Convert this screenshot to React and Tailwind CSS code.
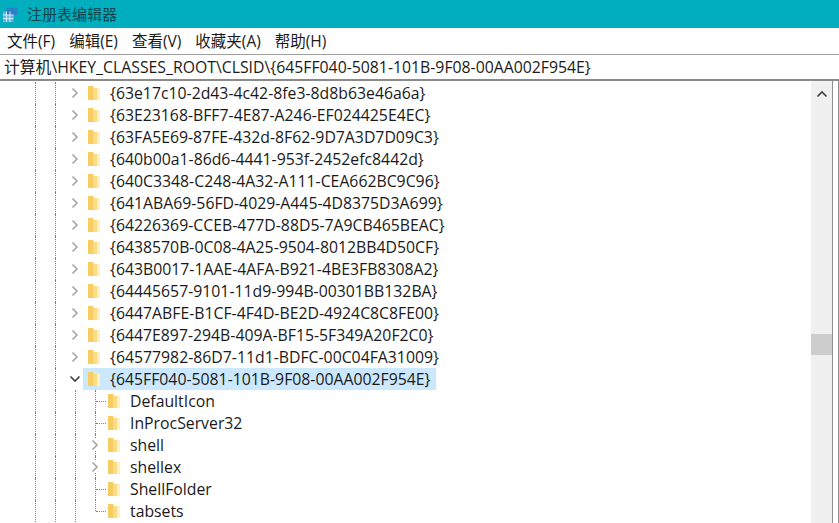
const keys = [
  "{63e17c10-2d43-4c42-8fe3-8d8b63e46a6a}",
  "{63E23168-BFF7-4E87-A246-EF024425E4EC}",
  "{63FA5E69-87FE-432d-8F62-9D7A3D7D09C3}",
  "{640b00a1-86d6-4441-953f-2452efc8442d}",
  "{640C3348-C248-4A32-A111-CEA662BC9C96}",
  "{641ABA69-56FD-4029-A445-4D8375D3A699}",
  "{64226369-CCEB-477D-88D5-7A9CB465BEAC}",
  "{6438570B-0C08-4A25-9504-8012BB4D50CF}",
  "{643B0017-1AAE-4AFA-B921-4BE3FB8308A2}",
  "{64445657-9101-11d9-994B-00301BB132BA}",
  "{6447ABFE-B1CF-4F4D-BE2D-4924C8C8FE00}",
  "{6447E897-294B-409A-BF15-5F349A20F2C0}",
  "{64577982-86D7-11d1-BDFC-00C04FA31009}",
];

const children = [
  { name: "DefaultIcon" },
  { name: "InProcServer32" },
  { name: "shell", more: true },
  { name: "shellex", more: true },
  { name: "ShellFolder" },
  { name: "tabsets" },
];

const menus = ["文件(F)", "编辑(E)", "查看(V)", "收藏夹(A)", "帮助(H)"];

function Folder() {
  return (
    <svg width="12" height="16" viewBox="0 0 12 16" className="shrink-0">
      <path d="M0 1h5l1 2v12H0z" fill="#f7cd62" />
      <path d="M5 3h4v12H5z" fill="#fbdc86" />
      <path d="M9 3h3v12H9z" fill="#fdf0c4" />
    </svg>
  );
}

function Chevron({ open }) {
  return (
    <svg width="12" height="12" viewBox="0 0 12 12" fill="none" strokeWidth="1.6">
      {open ? (
        <path d="M1.5 3.5 6 8l4.5-4.5" stroke="#404040" />
      ) : (
        <path d="M3.5 1.5 8 6l-4.5 4.5" stroke="#a6a6a6" />
      )}
    </svg>
  );
}

function Guide({ narrow }) {
  return (
    <div className={`${narrow ? "w-[14px]" : "w-5"} shrink-0 self-stretch border-l border-dotted border-[#808080]`} />
  );
}

function KeyRow({ text, open }) {
  return (
    <div className="flex h-[22px] items-center pl-[35px]">
      <Guide />
      <Guide narrow />
      <div className="mr-[2px] w-3 shrink-0">
        <Chevron open={open} />
      </div>
      <div className={`flex h-full items-center pl-[5px] pr-[5px] ${open ? "bg-[#cce8ff]" : ""}`}>
        <Folder />
        <span className="ml-[10px] whitespace-nowrap pt-[2px]">{text}</span>
      </div>
    </div>
  );
}

function ChildRow({ item, last }) {
  return (
    <div className="flex h-[22px] items-center pl-[35px]">
      <Guide />
      <Guide />
      <Guide narrow />
      <div className="relative flex h-full w-3 shrink-0 items-center justify-center">
        <div className={`absolute left-[6px] top-0 border-l border-dotted border-[#808080] ${last ? "h-[11px]" : "h-full"}`} />
        {item.more ? (
          <div className="relative bg-white">
            <Chevron />
          </div>
        ) : (
          <div className="absolute left-[7px] top-[11px] w-[10px] border-t border-dotted border-[#808080]" />
        )}
      </div>
      <div className="ml-[7px] flex items-center">
        <Folder />
        <span className="ml-[10px] whitespace-nowrap pt-[2px]">{item.name}</span>
      </div>
    </div>
  );
}

export default function App() {
  return (
    <div className="flex h-[523px] w-[839px] flex-col overflow-hidden bg-white font-['Open_Sans','Noto_Sans_CJK_SC',sans-serif] text-[15.8px] text-[#1a1a1a]">
      <div className="flex h-7 shrink-0 items-center gap-[9px] bg-[#00aebd] pl-[2px] text-[15px] text-[#10454c]">
        <svg width="16" height="16" viewBox="0 0 18 18" className="mt-[1px]">
          <path d="M1 5h12v12H1z" fill="#5fb4e6" />
          <path d="M5 1h12v8H5z" fill="#2b7fc4" />
          <path d="M5 5v12M9 5v12M1 9h12M1 13h12" stroke="#dff1fb" strokeWidth="1" />
        </svg>
        <span>注册表编辑器</span>
      </div>

      <div className="flex h-[27px] shrink-0 items-center gap-[14px] border-b border-[#a0a0a0] pl-[7px] pt-[2px] text-[15.5px]">
        {menus.map((m) => (
          <span key={m}>{m}</span>
        ))}
      </div>

      <div className="flex h-[26px] shrink-0 items-center border-b-2 border-[#8a8a8a] pl-[4px] pt-[1px]">
        计算机\HKEY_CLASSES_ROOT\CLSID\{"{645FF040-5081-101B-9F08-00AA002F954E}"}
      </div>

      <div className="flex min-h-0 flex-1">
        <div className="min-w-0 flex-1 overflow-hidden pt-[1px]">
          {keys.map((k) => (
            <KeyRow key={k} text={k} />
          ))}
          <KeyRow text="{645FF040-5081-101B-9F08-00AA002F954E}" open />
          {children.map((c, i) => (
            <ChildRow key={c.name} item={c} last={i === children.length - 1} />
          ))}
        </div>

        <div className="flex w-[21px] shrink-0 flex-col items-center bg-[#f0f0f0] pt-[8px]">
          <svg width="12" height="10" viewBox="0 0 12 10" fill="none" stroke="#404040" strokeWidth="1.6">
            <path d="M1.5 7.5 6 3l4.5 4.5" />
          </svg>
          <div className="mt-[235px] h-[21px] w-full bg-[#cdcdcd]" />
        </div>

        <div className="w-[7px] shrink-0 border-x border-[#8f8f8f] bg-white" />
      </div>
    </div>
  );
}
